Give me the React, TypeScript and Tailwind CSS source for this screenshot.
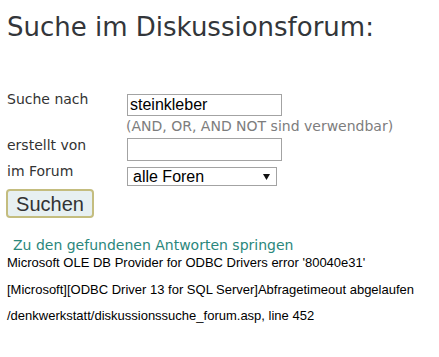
import React from "react";

export default function App() {
  return (
    <div className="min-h-[357px] w-[439px] bg-white pl-[7px] pt-[12px] font-['DejaVu_Sans',Verdana,sans-serif]">
      <h1 className="text-[26px] leading-[30px] font-normal text-[#33363a]">
        Suche im Diskussionsforum:
      </h1>

      <div className="mt-[49px] flex flex-col text-[14px] leading-[17px] text-[#333]">
        <div className="flex items-start">
          <div className="w-[120px]">Suche nach</div>
          <div className="flex flex-col">
            <input
              readOnly
              value="steinkleber"
              className="mt-[3px] h-[22px] w-[155px] border border-[#a3a3a3] bg-white px-[2px] font-['Liberation_Sans',Arial,sans-serif] text-[16px] leading-[20px] text-black outline-none"
            />
            <div className="mt-[2px] -ml-[1px] text-[14px] leading-[17px] text-[#7d7d7d]">
              (AND, OR, AND NOT sind verwendbar)
            </div>
          </div>
        </div>

        <div className="mt-[2px] flex items-start">
          <div className="w-[120px]">erstellt von</div>
          <input
            readOnly
            value=""
            className="mt-[1px] h-[23px] w-[155px] border border-[#a3a3a3] bg-white px-[2px] font-['Liberation_Sans',Arial,sans-serif] text-[16px] text-black outline-none"
          />
        </div>

        <div className="mt-[2px] flex items-start">
          <div className="w-[120px]">im Forum</div>
          <div className="mt-[4px] flex h-[19px] w-[150px] items-center justify-between border border-[#a3a3a3] bg-white pl-[5px] pr-[6px] font-['Liberation_Sans',Arial,sans-serif] text-[16px] leading-[17px] text-black">
            <span>alle Foren</span>
            <svg width="7" height="6" viewBox="0 0 7 6">
              <path d="M0 0 H7 L3.5 6 Z" fill="#111" />
            </svg>
          </div>
        </div>

        <div className="mt-[3px] -ml-[1px]">
          <button className="h-[29px] w-[88px] rounded-[4px] border-2 border-[#c4bd7f] bg-[#e7f0f2] font-['Liberation_Sans',Arial,sans-serif] text-[20px] leading-[22px] text-[#333]">
            Suchen
          </button>
        </div>
      </div>

      <div className="mt-[19px] pl-[6px] text-[14px] leading-[17px] text-[#2b877c]">
        Zu den gefundenen Antworten springen
      </div>

      <div className="font-['Liberation_Sans',Arial,sans-serif] text-[13px] leading-[15px] text-black">
        <p className="mt-[1px]">Microsoft OLE DB Provider for ODBC Drivers error '80040e31'</p>
        <p className="mt-[12px]">[Microsoft][ODBC Driver 13 for SQL Server]Abfragetimeout abgelaufen</p>
        <p className="mt-[11px]">/denkwerkstatt/diskussionssuche_forum.asp, line 452</p>
      </div>
    </div>
  );
}
